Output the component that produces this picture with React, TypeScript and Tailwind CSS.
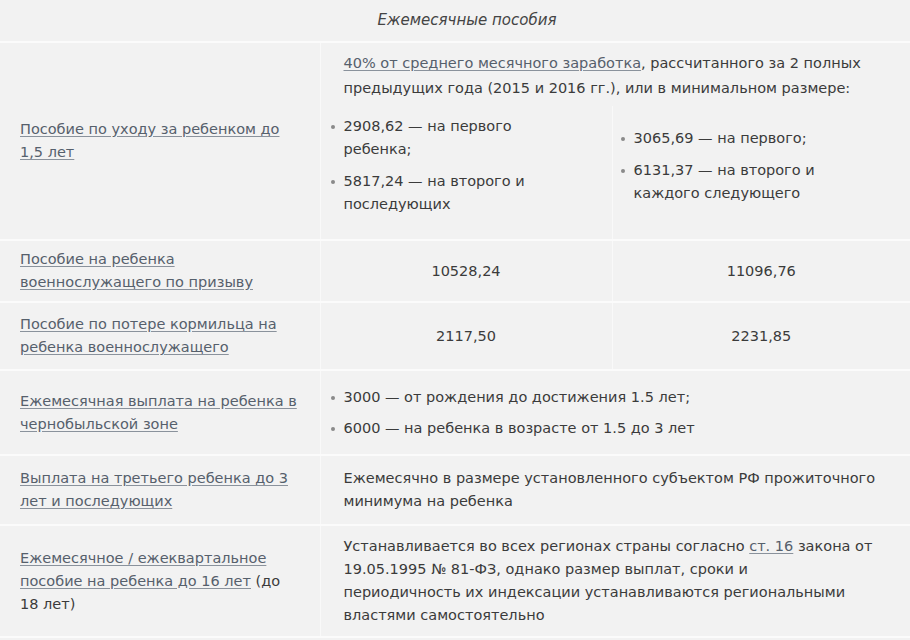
import React from "react";

const link = "text-[#56606c] underline decoration-[#8a929c] underline-offset-2";

function Dot() {
  return <span className="mt-[10px] h-[4px] w-[4px] shrink-0 rounded-full bg-[#8a8a8a]" />;
}

function Bullets({ items, gap = "gap-[9px]" }: { items: React.ReactNode[]; gap?: string }) {
  return (
    <ul className={`flex flex-col ${gap}`}>
      {items.map((item, i) => (
        <li key={i} className="flex gap-[9px]">
          <Dot />
          <span className="whitespace-nowrap">{item}</span>
        </li>
      ))}
    </ul>
  );
}

export default function App() {
  const cellLine = "border-b-2 border-[#fbfbfb]";
  const vline = "border-l border-[#f9f9f9]";
  return (
    <div
      className="h-[640px] w-[910px] overflow-hidden bg-[#f2f2f2] text-[14.5px] leading-[23px] text-[#3b3b3b]"
      style={{ fontFamily: '"DejaVu Sans", Verdana, sans-serif' }}
    >
      <table className="w-[910px] table-fixed border-collapse">
        <colgroup>
          <col className="w-[320px]" />
          <col className="w-[292px]" />
          <col className="w-[298px]" />
        </colgroup>
        <tbody>
          <tr className={cellLine}>
            <td colSpan={3} className="h-[42px] pl-6 text-center align-middle text-[15px] italic text-[#444]">
              Ежемесячные пособия
            </td>
          </tr>

          <tr>
            <td rowSpan={2} className={`${cellLine} pl-5 align-middle`}>
              <span className={link}>Пособие по уходу за ребенком до</span>
              <br />
              <span className={link}>1,5 лет</span>
            </td>
            <td colSpan={2} className={`${vline} h-[64px] whitespace-nowrap pl-[23px] pt-[8px] align-top leading-[25px]`}>
              <span className={link}>40% от среднего месячного заработка</span>, рассчитанного за 2 полных
              <br />
              предыдущих года (2015 и 2016 гг.), или в минимальном размере:
            </td>
          </tr>
          <tr className={cellLine}>
            <td className={`${vline} h-[134px] pb-[14px] pl-[10px] align-middle`}>
              <Bullets
                items={[
                  <>
                    2908,62 — на первого
                    <br />
                    ребенка;
                  </>,
                  <>
                    5817,24 — на второго и
                    <br />
                    последующих
                  </>,
                ]}
              />
            </td>
            <td className={`${vline} pb-[14px] pl-[8px] align-middle`}>
              <Bullets
                items={[
                  <>3065,69 — на первого;</>,
                  <>
                    6131,37 — на второго и
                    <br />
                    каждого следующего
                  </>,
                ]}
              />
            </td>
          </tr>

          <tr className={cellLine}>
            <td className="h-[62px] pl-5 align-middle">
              <span className={link}>Пособие на ребенка</span>
              <br />
              <span className={link}>военнослужащего по призыву</span>
            </td>
            <td className={`${vline} text-center align-middle`}>10528,24</td>
            <td className={`${vline} text-center align-middle`}>11096,76</td>
          </tr>

          <tr className={cellLine}>
            <td className="h-[68px] pl-5 align-middle">
              <span className={link}>Пособие по потере кормильца на</span>
              <br />
              <span className={link}>ребенка военнослужащего</span>
            </td>
            <td className={`${vline} text-center align-middle`}>2117,50</td>
            <td className={`${vline} text-center align-middle`}>2231,85</td>
          </tr>

          <tr className={cellLine}>
            <td className="h-[85px] pl-5 align-middle">
              <span className={link}>Ежемесячная выплата на ребенка в</span>
              <br />
              <span className={link}>чернобыльской зоне</span>
            </td>
            <td colSpan={2} className={`${vline} pl-[10px] align-middle`}>
              <Bullets
                gap="gap-[8px]"
                items={[
                  <>3000 — от рождения до достижения 1.5 лет;</>,
                  <>6000 — на ребенка в возрасте от 1.5 до 3 лет</>,
                ]}
              />
            </td>
          </tr>

          <tr className={cellLine}>
            <td className="h-[70px] pl-5 align-middle">
              <span className={link}>Выплата на третьего ребенка до 3</span>
              <br />
              <span className={link}>лет и последующих</span>
            </td>
            <td colSpan={2} className={`${vline} whitespace-nowrap pl-[23px] align-middle`}>
              Ежемесячно в размере установленного субъектом РФ прожиточного
              <br />
              минимума на ребенка
            </td>
          </tr>

          <tr className={cellLine}>
            <td className="h-[112px] pl-5 align-middle">
              <span className={link}>Ежемесячное / ежеквартальное</span>
              <br />
              <span className={link}>пособие на ребенка до 16 лет</span> (до
              <br />
              18 лет)
            </td>
            <td colSpan={2} className={`${vline} whitespace-nowrap pl-[23px] align-middle`}>
              Устанавливается во всех регионах страны согласно <span className={link}>ст. 16</span> закона от
              <br />
              19.05.1995 № 81-ФЗ, однако размер выплат, сроки и
              <br />
              периодичность их индексации устанавливаются региональными
              <br />
              властями самостоятельно
            </td>
          </tr>
        </tbody>
      </table>
    </div>
  );
}
